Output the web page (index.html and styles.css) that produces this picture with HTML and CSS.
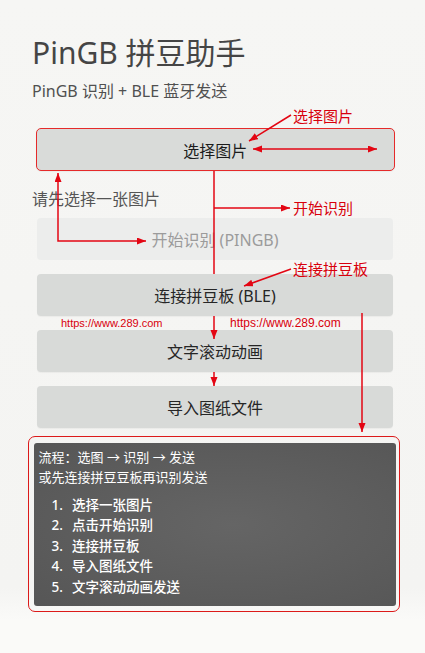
FILE: index.html
```html
<!DOCTYPE html>
<html lang="zh">
<head>
<meta charset="utf-8">
<title>PinGB 拼豆助手</title>
<link rel="stylesheet" href="styles.css">
</head>
<body>
<div class="page">
  <h1 class="title">PinGB 拼豆助手</h1>
  <p class="subtitle">PinGB 识别 + BLE 蓝牙发送</p>

  <div class="btn btn-primary">选择图片</div>
  <p class="hint">请先选择一张图片</p>

  <div class="stack">
    <div class="btn btn-disabled">开始识别 (PINGB)</div>
    <div class="btn">连接拼豆板 (BLE)</div>
    <div class="btn">文字滚动动画</div>
    <div class="btn">导入图纸文件</div>
  </div>

  <div class="flow-box">
    <div class="panel">
      <p class="panel-line">流程：选图 → 识别 → 发送</p>
      <p class="panel-line">或先连接拼豆豆板再识别发送</p>
      <ol class="steps">
        <li><span class="num">1.</span><span>选择一张图片</span></li>
        <li><span class="num">2.</span><span>点击开始识别</span></li>
        <li><span class="num">3.</span><span>连接拼豆板</span></li>
        <li><span class="num">4.</span><span>导入图纸文件</span></li>
        <li><span class="num">5.</span><span>文字滚动动画发送</span></li>
      </ol>
    </div>
  </div>

  <svg class="overlay" width="425" height="653" viewBox="0 0 425 653" aria-hidden="true">
    <defs>
      <marker id="ah" markerUnits="userSpaceOnUse" markerWidth="10" markerHeight="8" refX="9" refY="3.5" orient="auto-start-reverse">
        <path d="M0,0 L9,3.5 L0,7 z" fill="#e30613"/>
      </marker>
    </defs>
    <g fill="none" stroke="#e30613" stroke-width="1.5">
      <path d="M291,115 L249,141" marker-end="url(#ah)"/>
      <path d="M253,149 L377,149" marker-start="url(#ah)" marker-end="url(#ah)"/>
      <path d="M214,171 L214,274"/>
      <path d="M214,208 L290,208" marker-end="url(#ah)"/>
      <path d="M214,316 L214,339" marker-end="url(#ah)"/>
      <path d="M214,372 L214,386" marker-end="url(#ah)"/>
      <path d="M58,173 L58,241 L146,241" marker-start="url(#ah)" marker-end="url(#ah)"/>
      <path d="M291,269 L244,286" marker-end="url(#ah)"/>
      <path d="M362,313 L362,432" marker-end="url(#ah)"/>
    </g>
  </svg>

  <span class="note note-select">选择图片</span>
  <span class="note note-start">开始识别</span>
  <span class="note note-connect">连接拼豆板</span>
  <span class="url url-left">https://www.289.com</span>
  <span class="url url-right">https://www.289.com</span>
</div>
</body>
</html>
```

FILE: styles.css
```css
html, body {
  margin: 0;
  padding: 0;
}

body {
  background: #f5f5f3;
  font-family: "Noto Sans", "Noto Sans CJK SC", sans-serif;
  color: #333;
}

.page {
  position: relative;
  width: 425px;
  height: 653px;
  box-sizing: border-box;
  padding: 35px 30px 0 32px;
  display: flex;
  flex-direction: column;
  background: linear-gradient(#f6f6f4, #f4f4f2 90%, #fafaf8 95%);
  overflow: hidden;
}

.title {
  margin: 0;
  font-size: 30px;
  line-height: 36px;
  font-weight: 400;
  color: #454545;
}

.subtitle {
  margin: 9px 0 0;
  font-size: 16px;
  line-height: 22px;
  color: #505050;
}

.btn {
  height: 42px;
  box-sizing: border-box;
  margin: 0 2px 0 5px;
  display: flex;
  align-items: center;
  justify-content: center;
  background: #d8dad8;
  border-radius: 4px;
  font-size: 16px;
  color: #262626;
  box-shadow: 0 1px 1px rgba(0, 0, 0, 0.04);
}

.btn-primary {
  margin: 26px 0 0 3.5px;
  height: 43px;
  border: 1.5px solid #e52a2a;
  background: #d9dbd9;
  color: #1c1c1c;
  border-radius: 5px;
}

.hint {
  margin: 17px 0 0;
  font-size: 16px;
  line-height: 22px;
  color: #555;
}

.stack {
  margin-top: 8px;
  display: flex;
  flex-direction: column;
  gap: 14px;
}

.btn-disabled {
  background: #ecedec;
  color: #9b9b9b;
  box-shadow: none;
}

.flow-box {
  margin: 8px -5px 0 -4px;
  border: 1.5px solid #dc1a1a;
  border-radius: 7px;
  padding: 5.5px 3.5px 5.5px 4.5px;
}

.panel {
  background: radial-gradient(ellipse at 55% 50%, #656565, #565656);
  border-radius: 3px;
  padding: 4px 5px 8.5px 5px;
  color: #fff;
}

.panel-line {
  margin: 0;
  font-size: 13px;
  line-height: 20px;
}

.steps {
  list-style: none;
  margin: 8px 0 0;
  padding: 0 0 0 13px;
}

.steps li {
  display: flex;
  font-size: 13.5px;
  line-height: 20.5px;
  font-weight: 500;
}

.num {
  width: 20.5px;
}

.overlay {
  position: absolute;
  left: 0;
  top: 0;
  pointer-events: none;
}

.note {
  position: absolute;
  left: 293px;
  font-size: 15px;
  line-height: 15px;
  color: #d8000c;
  white-space: nowrap;
}

.note-select { top: 109px; }
.note-start { top: 200.5px; }
.note-connect { top: 261.5px; }

.url {
  position: absolute;
  font-family: "Liberation Sans", sans-serif;
  line-height: 1;
  color: #d8000c;
  white-space: nowrap;
}

.url-left {
  left: 61px;
  top: 318px;
  font-size: 11px;
}

.url-right {
  left: 230px;
  top: 317px;
  font-size: 12px;
}
```
